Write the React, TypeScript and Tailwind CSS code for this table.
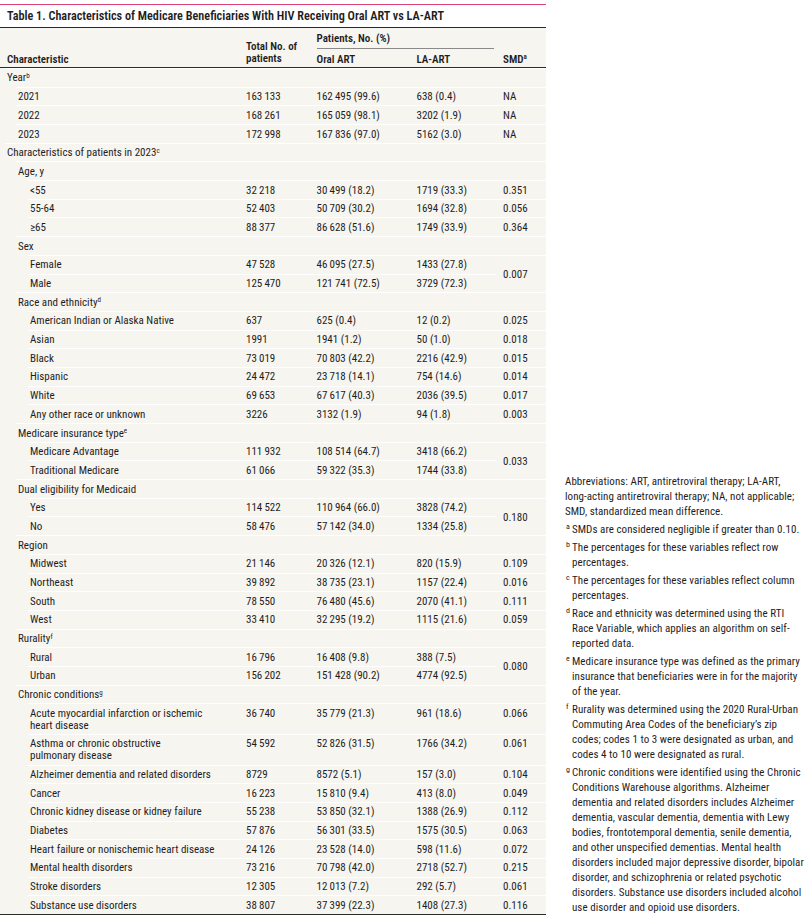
type Level = 0 | 1 | 2;

type Row = {
  label: React.ReactNode;
  level: Level;
  total?: string;
  oral?: string;
  la?: string;
  smd?: string;
  // label runs over two lines
  wrap?: boolean;
  // SMD shared with the next row (merged cell)
  span?: boolean;
  // row whose SMD cell is owned by the previous row
  merged?: boolean;
};

const T = '\u2009';

function Sup({ children }: { children: React.ReactNode }) {
  return <sup className="text-[7px]">{children}</sup>;
}

const ROWS: Row[] = [
  { label: <>Year<Sup>b</Sup></>, level: 0 },
  { label: '2021', level: 1, total: `163${T}133`, oral: `162${T}495 (99.6)`, la: '638 (0.4)', smd: 'NA' },
  { label: '2022', level: 1, total: `168${T}261`, oral: `165${T}059 (98.1)`, la: '3202 (1.9)', smd: 'NA' },
  { label: '2023', level: 1, total: `172${T}998`, oral: `167${T}836 (97.0)`, la: '5162 (3.0)', smd: 'NA' },
  { label: <>Characteristics of patients in 2023<Sup>c</Sup></>, level: 0 },
  { label: 'Age, y', level: 1 },
  { label: '<55', level: 2, total: `32${T}218`, oral: `30${T}499 (18.2)`, la: '1719 (33.3)', smd: '0.351' },
  { label: '55-64', level: 2, total: `52${T}403`, oral: `50${T}709 (30.2)`, la: '1694 (32.8)', smd: '0.056' },
  { label: '≥65', level: 2, total: `88${T}377`, oral: `86${T}628 (51.6)`, la: '1749 (33.9)', smd: '0.364' },
  { label: 'Sex', level: 1 },
  { label: 'Female', level: 2, total: `47${T}528`, oral: `46${T}095 (27.5)`, la: '1433 (27.8)', smd: '0.007', span: true },
  { label: 'Male', level: 2, total: `125${T}470`, oral: `121${T}741 (72.5)`, la: '3729 (72.3)', merged: true },
  { label: <>Race and ethnicity<Sup>d</Sup></>, level: 1 },
  { label: 'American Indian or Alaska Native', level: 2, total: '637', oral: '625 (0.4)', la: '12 (0.2)', smd: '0.025' },
  { label: 'Asian', level: 2, total: '1991', oral: '1941 (1.2)', la: '50 (1.0)', smd: '0.018' },
  { label: 'Black', level: 2, total: `73${T}019`, oral: `70${T}803 (42.2)`, la: '2216 (42.9)', smd: '0.015' },
  { label: 'Hispanic', level: 2, total: `24${T}472`, oral: `23${T}718 (14.1)`, la: '754 (14.6)', smd: '0.014' },
  { label: 'White', level: 2, total: `69${T}653`, oral: `67${T}617 (40.3)`, la: '2036 (39.5)', smd: '0.017' },
  { label: 'Any other race or unknown', level: 2, total: '3226', oral: '3132 (1.9)', la: '94 (1.8)', smd: '0.003' },
  { label: <>Medicare insurance type<Sup>e</Sup></>, level: 1 },
  { label: 'Medicare Advantage', level: 2, total: `111${T}932`, oral: `108${T}514 (64.7)`, la: '3418 (66.2)', smd: '0.033', span: true },
  { label: 'Traditional Medicare', level: 2, total: `61${T}066`, oral: `59${T}322 (35.3)`, la: '1744 (33.8)', merged: true },
  { label: 'Dual eligibility for Medicaid', level: 1 },
  { label: 'Yes', level: 2, total: `114${T}522`, oral: `110${T}964 (66.0)`, la: '3828 (74.2)', smd: '0.180', span: true },
  { label: 'No', level: 2, total: `58${T}476`, oral: `57${T}142 (34.0)`, la: '1334 (25.8)', merged: true },
  { label: 'Region', level: 1 },
  { label: 'Midwest', level: 2, total: `21${T}146`, oral: `20${T}326 (12.1)`, la: '820 (15.9)', smd: '0.109' },
  { label: 'Northeast', level: 2, total: `39${T}892`, oral: `38${T}735 (23.1)`, la: '1157 (22.4)', smd: '0.016' },
  { label: 'South', level: 2, total: `78${T}550`, oral: `76${T}480 (45.6)`, la: '2070 (41.1)', smd: '0.111' },
  { label: 'West', level: 2, total: `33${T}410`, oral: `32${T}295 (19.2)`, la: '1115 (21.6)', smd: '0.059' },
  { label: <>Rurality<Sup>f</Sup></>, level: 1 },
  { label: 'Rural', level: 2, total: `16${T}796`, oral: `16${T}408 (9.8)`, la: '388 (7.5)', smd: '0.080', span: true },
  { label: 'Urban', level: 2, total: `156${T}202`, oral: `151${T}428 (90.2)`, la: '4774 (92.5)', merged: true },
  { label: <>Chronic conditions<Sup>g</Sup></>, level: 1 },
  {
    label: <>Acute myocardial infarction or ischemic<br />heart disease</>,
    level: 2, wrap: true, total: `36${T}740`, oral: `35${T}779 (21.3)`, la: '961 (18.6)', smd: '0.066',
  },
  {
    label: <>Asthma or chronic obstructive<br />pulmonary disease</>,
    level: 2, wrap: true, total: `54${T}592`, oral: `52${T}826 (31.5)`, la: '1766 (34.2)', smd: '0.061',
  },
  { label: 'Alzheimer dementia and related disorders', level: 2, total: '8729', oral: '8572 (5.1)', la: '157 (3.0)', smd: '0.104' },
  { label: 'Cancer', level: 2, total: `16${T}223`, oral: `15${T}810 (9.4)`, la: '413 (8.0)', smd: '0.049' },
  { label: 'Chronic kidney disease or kidney failure', level: 2, total: `55${T}238`, oral: `53${T}850 (32.1)`, la: '1388 (26.9)', smd: '0.112' },
  { label: 'Diabetes', level: 2, total: `57${T}876`, oral: `56${T}301 (33.5)`, la: '1575 (30.5)', smd: '0.063' },
  { label: 'Heart failure or nonischemic heart disease', level: 2, total: `24${T}126`, oral: `23${T}528 (14.0)`, la: '598 (11.6)', smd: '0.072' },
  { label: 'Mental health disorders', level: 2, total: `73${T}216`, oral: `70${T}798 (42.0)`, la: '2718 (52.7)', smd: '0.215' },
  { label: 'Stroke disorders', level: 2, total: `12${T}305`, oral: `12${T}013 (7.2)`, la: '292 (5.7)', smd: '0.061' },
  { label: 'Substance use disorders', level: 2, total: `38${T}807`, oral: `37${T}399 (22.3)`, la: '1408 (27.3)', smd: '0.116' },
];

// where the white rule above a row starts, and the text indent after it
const INDENT: Record<Level, string> = {
  0: 'pl-[5px]',
  1: 'pl-[16px]',
  2: 'pl-[28px]',
};

const cell = 'border-t border-white pl-[7px] pt-[3.5px] pb-[3.2px] align-top whitespace-nowrap';

function BodyRow({ row }: { row: Row }) {
  return (
    <tr>
      <td className={`${INDENT[row.level]} p-0 align-top`}>
        <div
          className={
            row.wrap
              ? 'border-t border-white pb-[2.5px] pl-[2px] pt-[3.5px] leading-[11.8px]'
              : 'border-t border-white pb-[3.2px] pl-[2px] pt-[3.5px]'
          }
        >
          {row.label}
        </div>
      </td>
      <td className={cell}>{row.total}</td>
      <td className={cell}>{row.oral}</td>
      <td className={cell}>{row.la}</td>
      {row.merged ? null : (
        <td rowSpan={row.span ? 2 : 1} className={row.span ? `${cell} !align-middle` : cell}>
          {row.smd}
        </td>
      )}
    </tr>
  );
}

function Footnote({ mark, children }: { mark: string; children: React.ReactNode }) {
  return (
    <div className="flex">
      <span className="w-[7px] shrink-0 pl-[1px] text-[8px] leading-[10px]">{mark}</span>
      <p>{children}</p>
    </div>
  );
}

const condensed = "font-['Roboto_Condensed',Roboto,sans-serif] [font-stretch:75%]";

export default function App() {
  return (
    <div className={`flex h-[915px] w-[810px] items-end overflow-hidden bg-white text-[#1f1d1e] ${condensed}`}>
      <div className="flex h-full w-[546px] shrink-0 flex-col">
        <div className="mt-[3.5px] h-[1.5px] bg-[#dc3f73]" />
        <h1 className="whitespace-nowrap pl-[7px] pt-[4px] text-[12.2px] font-semibold leading-[16px]">
          Table 1. Characteristics of Medicare Beneficiaries With HIV Receiving Oral ART vs LA-ART
        </h1>
        <table className="mt-[2.5px] w-[546px] table-fixed border-separate border-spacing-0 border-t border-b border-[#2a2a2a] bg-[#f6f5f0] text-[11px] leading-[11px]">
          <colgroup>
            <col className="w-[239px]" />
            <col className="w-[70.5px]" />
            <col className="w-[100px]" />
            <col className="w-[86.5px]" />
            <col className="w-[50px]" />
          </colgroup>
          <thead>
            <tr>
              <th rowSpan={2} className="border-b border-[#2a2a2a] pb-[2px] pl-[7px] text-left align-bottom font-semibold">
                Characteristic
              </th>
              <th rowSpan={2} className="border-b border-[#2a2a2a] pb-[2px] pl-[7px] text-left align-bottom font-semibold leading-[12px]">
                Total No. of
                <br />
                patients
              </th>
              <th colSpan={2} className="p-0 text-left font-semibold">
                <div className="ml-[7px] mr-[2px] border-b border-[#8a8a8a] pb-[3px] pt-[5px] leading-[12px]">
                  Patients, No. (%)
                </div>
              </th>
              <th rowSpan={2} className="border-b border-[#2a2a2a] pb-[2px] pl-[7px] text-left align-bottom font-semibold">
                SMD<Sup>a</Sup>
              </th>
            </tr>
            <tr>
              <th className="border-b border-[#2a2a2a] pb-[2px] pl-[7px] pt-[5px] text-left font-semibold">Oral ART</th>
              <th className="border-b border-[#2a2a2a] pb-[2px] pl-[7px] pt-[5px] text-left font-semibold">LA-ART</th>
            </tr>
          </thead>
          <tbody>
            {ROWS.map((row, i) => (
              <BodyRow key={i} row={row} />
            ))}
          </tbody>
        </table>
      </div>

      <div className="ml-[19px] flex w-[245px] shrink-0 flex-col gap-[3px] whitespace-nowrap text-[11px] leading-[15px] tracking-[0.05px]">
        <p>
          Abbreviations: ART, antiretroviral therapy; LA-ART,
          <br />
          long-acting antiretroviral therapy; NA, not applicable;
          <br />
          SMD, standardized mean difference.
        </p>
        <Footnote mark="a">SMDs are considered negligible if greater than 0.10.</Footnote>
        <Footnote mark="b">
          The percentages for these variables reflect row
          <br />
          percentages.
        </Footnote>
        <Footnote mark="c">
          The percentages for these variables reflect column
          <br />
          percentages.
        </Footnote>
        <Footnote mark="d">
          Race and ethnicity was determined using the RTI
          <br />
          Race Variable, which applies an algorithm on self-
          <br />
          reported data.
        </Footnote>
        <Footnote mark="e">
          Medicare insurance type was defined as the primary
          <br />
          insurance that beneficiaries were in for the majority
          <br />
          of the year.
        </Footnote>
        <Footnote mark="f">
          Rurality was determined using the 2020 Rural-Urban
          <br />
          Commuting Area Codes of the beneficiary’s zip
          <br />
          codes; codes 1 to 3 were designated as urban, and
          <br />
          codes 4 to 10 were designated as rural.
        </Footnote>
        <Footnote mark="g">
          Chronic conditions were identified using the Chronic
          <br />
          Conditions Warehouse algorithms. Alzheimer
          <br />
          dementia and related disorders includes Alzheimer
          <br />
          dementia, vascular dementia, dementia with Lewy
          <br />
          bodies, frontotemporal dementia, senile dementia,
          <br />
          and other unspecified dementias. Mental health
          <br />
          disorders included major depressive disorder, bipolar
          <br />
          disorder, and schizophrenia or related psychotic
          <br />
          disorders. Substance use disorders included alcohol
          <br />
          use disorder and opioid use disorders.
        </Footnote>
      </div>
    </div>
  );
}
